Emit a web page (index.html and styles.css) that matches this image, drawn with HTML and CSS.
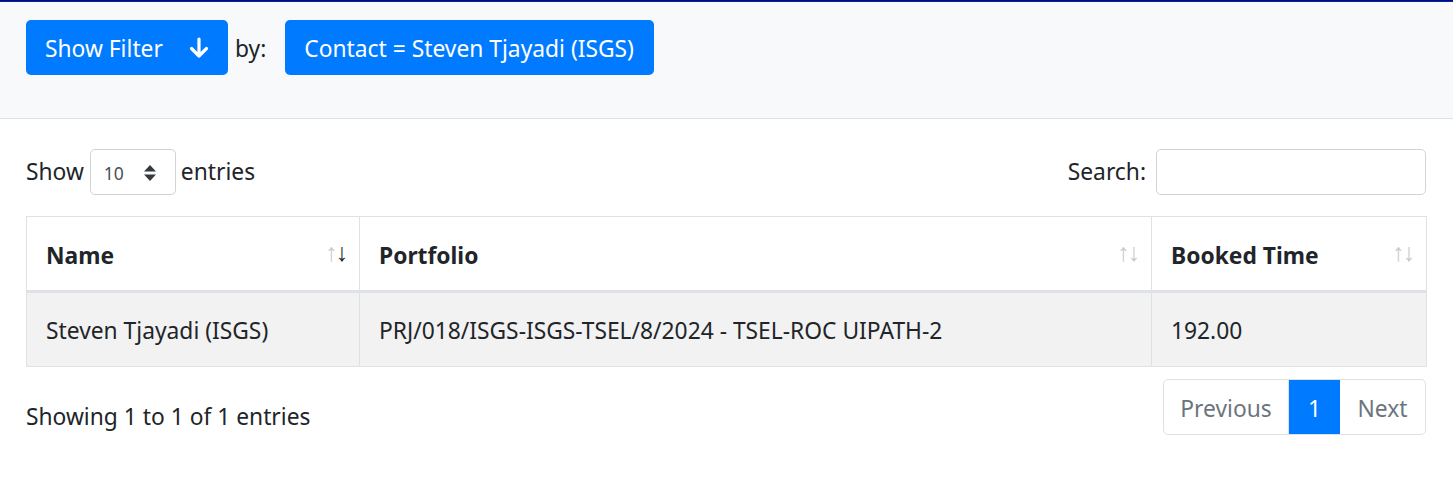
FILE: index.html
```html
<!DOCTYPE html>
<html lang="en">
<head>
<meta charset="utf-8">
<title>Booked Time</title>
<link rel="stylesheet" href="styles.css">
</head>
<body>
<div class="topline"></div>
<header class="filterbar">
  <button class="btn btn-primary btn-filter">Show Filter
    <svg class="arrow" width="20" height="22" viewBox="0 0 20 22"><path d="M10 2 V19 M2.5 11.5 L10 19 L17.5 11.5" fill="none" stroke="#fff" stroke-width="3.2" stroke-linecap="round" stroke-linejoin="round"/></svg>
  </button>
  <span class="by">by:</span>
  <button class="btn btn-primary">Contact = Steven Tjayadi (ISGS)</button>
</header>
<main class="content">
  <div class="controls">
    <label class="length">Show
      <span class="select">10
        <svg class="updown" width="14" height="18" viewBox="0 0 14 18"><path d="M7 1 L13 7.5 H1 Z M7 17 L13 10.5 H1 Z" fill="#343a40"/></svg>
      </span>
      entries</label>
    <label class="search">Search: <span class="input"></span></label>
  </div>
  <table class="dt">
    <colgroup><col class="c1"><col class="c2"><col class="c3"></colgroup>
    <thead>
      <tr>
        <th><span class="th-inner">Name</span><span class="sort"><span class="up">↑</span><span class="down on">↓</span></span></th>
        <th><span class="th-inner">Portfolio</span><span class="sort"><span class="up">↑</span><span class="down">↓</span></span></th>
        <th><span class="th-inner">Booked Time</span><span class="sort"><span class="up">↑</span><span class="down">↓</span></span></th>
      </tr>
    </thead>
    <tbody>
      <tr>
        <td>Steven Tjayadi (ISGS)</td>
        <td>PRJ/018/ISGS-ISGS-TSEL/8/2024 - TSEL-ROC UIPATH-2</td>
        <td>192.00</td>
      </tr>
    </tbody>
  </table>
  <div class="footer">
    <div class="info">Showing 1 to 1 of 1 entries</div>
    <ul class="pagination">
      <li class="page prev">Previous</li>
      <li class="page active">1</li>
      <li class="page next">Next</li>
    </ul>
  </div>
</main>
</body>
</html>
```
FILE: styles.css
```css
* { box-sizing: border-box; }
html, body { margin: 0; padding: 0; background: #fff; }
body {
  font-family: "Noto Sans", "Open Sans", sans-serif;
  font-size: 22.8px;
  line-height: 30px;
  color: #212529;
}
.topline {
  height: 2px;
  background: linear-gradient(#00006e, #0a2fb0);
}
.filterbar {
  background: #f8f9fa;
  border-bottom: 1px solid #dee2e6;
  height: 117px;
  padding: 18px 26px 0;
  display: flex;
  align-items: flex-start;
}
.btn {
  font: inherit;
  height: 55px;
  border: 0;
  border-radius: 5px;
  padding: 2px 20px 0 19px;
  display: inline-flex;
  align-items: center;
  cursor: pointer;
}
.btn-primary { background: #007bff; color: #fff; }
.btn-filter { width: 202px; justify-content: space-between; padding-right: 19px; }
.arrow { display: block; margin-top: -1px; }
.by { margin: 14px 19px 0 7px; line-height: 30px; }
.content { padding: 30px 27px 0 26px; }
.controls {
  display: flex;
  justify-content: space-between;
  align-items: center;
  height: 46px;
}
.length, .search { display: flex; align-items: center; }
.select {
  display: inline-flex;
  align-items: center;
  justify-content: space-between;
  width: 86px;
  height: 46px;
  margin: 0 5px 0 6px;
  padding: 2px 18px 0 13px;
  border: 1px solid #ced4da;
  border-radius: 5px;
  font-size: 17.5px;
  color: #495057;
}
.updown { display: block; }
.search .input {
  display: block;
  width: 270px;
  height: 46px;
  margin-left: 10px;
  border: 1px solid #ced4da;
  border-radius: 5px;
  background: #fff;
}
.dt {
  margin-top: 21px;
  width: 1400px;
  border-collapse: collapse;
  border: 1px solid #dee2e6;
  table-layout: fixed;
}
.c1 { width: 333px; }
.c2 { width: 792px; }
.c3 { width: 275px; }
.dt th {
  position: relative;
  height: 75px;
  text-align: left;
  font-weight: 700;
  padding: 5px 20px 0 19px;
  border: 1px solid #dee2e6;
  border-bottom: 3px solid #dee2e6;
}
.sort {
  position: absolute;
  right: 13px;
  top: 21px;
  font-size: 25px;
  font-weight: 400;
  line-height: 26px;
  letter-spacing: -2px;
}
.sort .up, .sort .down { color: #212529; opacity: 0.25; }
.sort .on { opacity: 1; }
.dt td {
  height: 75px;
  padding: 3px 20px 0 19px;
  background: #f2f2f2;
  border: 1px solid #dee2e6;
}
.footer {
  display: flex;
  justify-content: space-between;
  align-items: flex-start;
  padding-top: 12px;
}
.info { padding-top: 23px; }
.pagination {
  display: flex;
  list-style: none;
  margin: 0;
  padding: 0;
  border: 1px solid #dee2e6;
  border-radius: 5px;
  height: 56px;
  overflow: hidden;
}
.page {
  display: flex;
  align-items: center;
  justify-content: center;
  color: #6c757d;
  padding-top: 4px;
}
.prev { width: 125px; border-right: 1px solid #dee2e6; }
.active { width: 51px; background: #007bff; color: #fff; }
.next { width: 85px; }
```
